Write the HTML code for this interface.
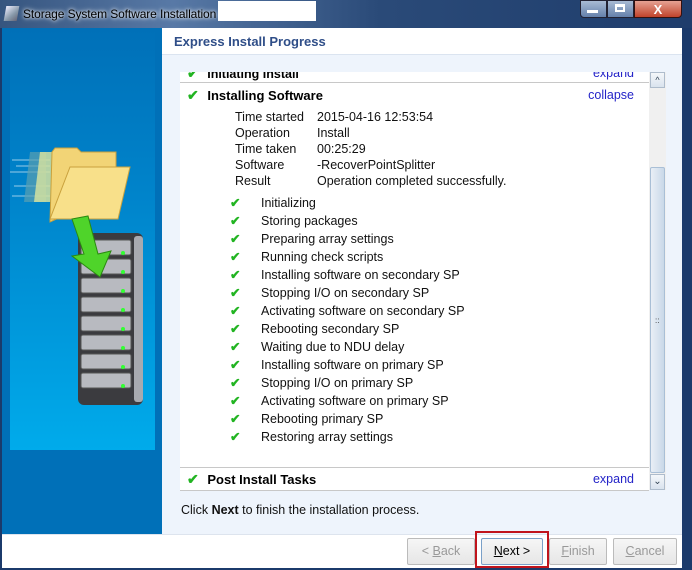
<!DOCTYPE html>
<html><head><style>
*{margin:0;padding:0;box-sizing:border-box}
body{width:692px;height:570px;overflow:hidden;background:#1b3a6b;font-family:"Liberation Sans",Tahoma,sans-serif;font-size:12.5px;position:relative}
.abs{position:absolute}
.title{left:0;top:0;width:692px;height:28px;background:linear-gradient(90deg,#36557f 0%,#5879a6 25%,#2a4a78 55%,#1f3d6c 100%)}
.tt{left:23px;top:7px;color:#000;font-size:12px;text-shadow:0 0 6px #fff,0 0 3px #fff;letter-spacing:-0.1px}
.chk{color:#22b422;font-weight:bold;font-size:14px}
.row{position:absolute;left:0;height:18px;line-height:18px}
.btn{position:absolute;top:538px;height:27px;border:1px solid #bbb;background:linear-gradient(#f6f6f6,#e6e6e6);border-radius:2px;text-align:center;line-height:25px;font-size:12.5px;color:#999}
</style></head><body>
<div class="abs title"></div>
<div class="abs" style="left:5px;top:6px;width:13px;height:15px;background:linear-gradient(135deg,#eef 0%,#89a 60%,#667 100%);transform:skewX(-10deg)"></div>
<div class="abs tt">Storage System Software Installation</div>
<div class="abs" style="left:218px;top:1px;width:98px;height:20px;background:#fff"></div>
<div class="abs" style="left:580px;top:0;width:27px;height:18px;border:1px solid #223;border-radius:0 0 0 4px;background:linear-gradient(#a9bbd4,#6581ab)"></div>
<div class="abs" style="left:587px;top:10px;width:11px;height:3px;background:#fff"></div>
<div class="abs" style="left:607px;top:0;width:27px;height:18px;border:1px solid #223;background:linear-gradient(#a9bbd4,#6581ab)"></div>
<div class="abs" style="left:615px;top:4px;width:10px;height:8px;border:2px solid #fff;border-top-width:3px"></div>
<div class="abs" style="left:634px;top:0;width:48px;height:18px;border:1px solid #311;border-radius:0 0 4px 0;background:linear-gradient(#e6a293,#c1432b);color:#fff;font-weight:bold;text-align:center;line-height:17px;font-size:13px">X</div>
<!-- client -->
<div class="abs" style="left:2px;top:28px;width:680px;height:540px;background:#fff"></div>
<div class="abs" style="left:2px;top:28px;width:160px;height:506px;background:#0070b8"></div>
<div class="abs" style="left:10px;top:28px;width:145px;height:422px;background:linear-gradient(#0070b8 0%,#0084cb 40%,#00abeb 100%)"></div>
<!-- art in page coords -->
<svg class="abs" style="left:0;top:0" width="162" height="450" viewBox="0 0 162 450">
<g stroke="#fff" stroke-width="1" opacity=".6"><line x1="12" y1="160" x2="50" y2="160"/><line x1="16" y1="166" x2="50" y2="166"/><line x1="10" y1="172" x2="50" y2="172"/><line x1="14" y1="186" x2="50" y2="186"/><line x1="12" y1="196" x2="50" y2="196"/></g>
<path d="M30 152 h16 v50 h-22z" fill="#5aa0b0" opacity=".7"/>
<path d="M40 152 h16 v50 h-22z" fill="#d2e0a0" opacity=".85"/>
<path d="M52 152 l3 -4 h22 l4 4 h35 v40 l-66 30z" fill="#f2d476" stroke="#c9a13d"/>
<path d="M70 167 h60 l-12 52 h-68z" fill="#f8e08a" stroke="#c9a13d"/>
<rect x="78" y="233" width="65" height="172" rx="6" fill="#3b3b3f"/>
<rect x="134" y="236" width="9" height="166" rx="3" fill="#a8aab0"/>
<g fill="#b8bac0" stroke="#555">
<rect x="81" y="240" width="50" height="15" rx="2"/><rect x="81" y="259" width="50" height="15" rx="2"/><rect x="81" y="278" width="50" height="15" rx="2"/><rect x="81" y="297" width="50" height="15" rx="2"/><rect x="81" y="316" width="50" height="15" rx="2"/><rect x="81" y="335" width="50" height="15" rx="2"/><rect x="81" y="354" width="50" height="15" rx="2"/><rect x="81" y="373" width="50" height="15" rx="2"/></g>
<g fill="#3f3"><circle cx="123" cy="253" r="2"/><circle cx="123" cy="272" r="2"/><circle cx="123" cy="291" r="2"/><circle cx="123" cy="310" r="2"/><circle cx="123" cy="329" r="2"/><circle cx="123" cy="348" r="2"/><circle cx="123" cy="367" r="2"/><circle cx="123" cy="386" r="2"/></g>
<path d="M72 219 l16 -3 l10 38 l13 -3 l-11 26 l-28 -21 l12 -2z" fill="#4fd42a" stroke="#2a8a10"/>
</svg>
<!-- right panel -->
<div class="abs" style="left:162px;top:28px;width:520px;height:506px;background:#eef4fc"></div>
<div class="abs" style="left:162px;top:28px;width:520px;height:27px;background:#fff;border-bottom:1px solid #dbe4f0"></div>
<div class="abs" style="left:174px;top:34px;color:#2f4e88;font-weight:bold;font-size:13px">Express Install Progress</div>
<div class="abs" style="left:180px;top:72px;width:469px;height:418px;background:#fff;overflow:hidden">
 <div class="row" style="top:-8px;left:7px;width:460px"><span class="chk">✔</span> <b style="margin-left:5px">Initiating Install</b><span style="position:absolute;right:13px;color:#2424c8">expand</span></div>
 <div class="abs" style="left:0;top:10px;width:469px;height:1px;background:#c8c8c8"></div>
 <div class="row" style="top:14px;left:7px;width:460px;font-size:13px"><span class="chk">✔</span> <b style="margin-left:5px">Installing Software</b><span style="position:absolute;right:13px;color:#2424c8;font-size:12.5px">collapse</span></div>
 <div class="abs" style="left:55px;top:37px;line-height:16px;color:#111">Time started<br>Operation<br>Time taken<br>Software<br>Result</div>
 <div class="abs" style="left:137px;top:37px;line-height:16px;color:#111">2015-04-16 12:53:54<br>Install<br>00:25:29<br>-RecoverPointSplitter<br>Operation completed successfully.</div>
 <div class="abs" style="left:50px;top:122px;line-height:18px;color:#22b422;font-weight:bold">✔<br>✔<br>✔<br>✔<br>✔<br>✔<br>✔<br>✔<br>✔<br>✔<br>✔<br>✔<br>✔<br>✔</div>
 <div class="abs" style="left:81px;top:122px;line-height:18px;color:#111">Initializing<br>Storing packages<br>Preparing array settings<br>Running check scripts<br>Installing software on secondary SP<br>Stopping I/O on secondary SP<br>Activating software on secondary SP<br>Rebooting secondary SP<br>Waiting due to NDU delay<br>Installing software on primary SP<br>Stopping I/O on primary SP<br>Activating software on primary SP<br>Rebooting primary SP<br>Restoring array settings</div>
 <div class="abs" style="left:0;top:395px;width:469px;height:1px;background:#c8c8c8"></div>
 <div class="row" style="top:398px;left:7px;width:460px;font-size:13px"><span class="chk">✔</span> <b style="margin-left:5px">Post Install Tasks</b><span style="position:absolute;right:13px;color:#2424c8;font-size:12.5px">expand</span></div>
</div>
<div class="abs" style="left:180px;top:490px;width:469px;height:1px;background:#c8c8c8"></div>
<!-- scrollbar -->
<div class="abs" style="left:649px;top:72px;width:17px;height:418px;background:#f0f0f0"></div>
<div class="abs" style="left:650px;top:72px;width:15px;height:16px;border:1px solid #aebccc;background:linear-gradient(#f4f7fa,#d9e3ee);color:#345;font-size:9px;text-align:center;line-height:14px">^</div>
<div class="abs" style="left:650px;top:167px;width:15px;height:306px;border:1px solid #a9bfd6;border-radius:2px;background:linear-gradient(90deg,#e9eff6,#c9d8e8)"></div>
<div class="abs" style="left:655px;top:316px;font-size:8px;color:#333">::</div>
<div class="abs" style="left:650px;top:474px;width:15px;height:16px;border:1px solid #aebccc;background:linear-gradient(#f4f7fa,#d9e3ee);color:#345;font-size:10px;text-align:center;line-height:14px">&#8964;</div>
<div class="abs" style="left:181px;top:503px;color:#111">Click <b>Next</b> to finish the installation process.</div>
<div class="abs" style="left:2px;top:534px;width:680px;height:1px;background:#dde4ee"></div>
<!-- buttons -->
<div class="btn" style="left:407px;width:68px">&lt; <u>B</u>ack</div>
<div class="abs" style="left:475px;top:531px;width:74px;height:37px;border:2px solid #c0141c"></div>
<div class="btn" style="left:481px;width:62px;color:#000;border-color:#7aa0c8"><u>N</u>ext &gt;</div>
<div class="btn" style="left:549px;width:58px"><u>F</u>inish</div>
<div class="btn" style="left:613px;width:64px"><u>C</u>ancel</div>
</body></html>
